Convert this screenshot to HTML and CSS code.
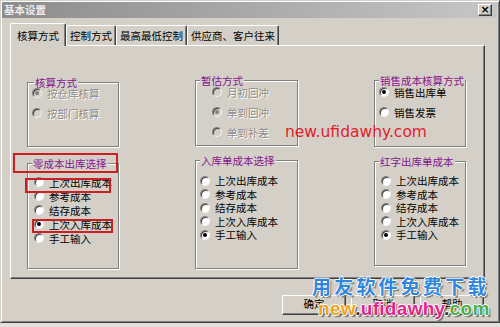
FILE: index.html
```html
<!DOCTYPE html>
<html lang="zh-CN">
<head>
<meta charset="utf-8">
<title>基本设置</title>
<link rel="stylesheet" href="styles.css">
</head>
<body>
<div class="window">
  <div class="titlebar">
    <span class="title">基本设置</span>
    <span class="close">×</span>
  </div>
  <div class="content">
    <div class="tabs">
      <div class="tab active">核算方式</div>
      <div class="tab">控制方式</div>
      <div class="tab">最高最低控制</div>
      <div class="tab">供应商、客户往来</div>
    </div>
    <div class="panel">
      <div class="groups">
        <div class="group g1">
          <span class="legend">核算方式</span>
          <div class="opt disabled checked"><span class="radio"></span>按仓库核算</div>
          <div class="opt disabled"><span class="radio"></span>按部门核算</div>
        </div>
        <div class="group g2">
          <span class="legend">暂估方式</span>
          <div class="opt disabled"><span class="radio"></span>月初回冲</div>
          <div class="opt disabled checked"><span class="radio"></span>单到回冲</div>
          <div class="opt disabled"><span class="radio"></span>单到补差</div>
        </div>
        <div class="group g3">
          <span class="legend">销售成本核算方式</span>
          <div class="opt checked"><span class="radio"></span>销售出库单</div>
          <div class="opt"><span class="radio"></span>销售发票</div>
        </div>
        <div class="group g4">
          <span class="legend">零成本出库选择</span>
          <div class="opt"><span class="radio"></span>上次出库成本</div>
          <div class="opt"><span class="radio"></span>参考成本</div>
          <div class="opt"><span class="radio"></span>结存成本</div>
          <div class="opt checked"><span class="radio"></span>上次入库成本</div>
          <div class="opt"><span class="radio"></span>手工输入</div>
        </div>
        <div class="group g5">
          <span class="legend">入库单成本选择</span>
          <div class="opt"><span class="radio"></span>上次出库成本</div>
          <div class="opt"><span class="radio"></span>参考成本</div>
          <div class="opt"><span class="radio"></span>结存成本</div>
          <div class="opt"><span class="radio"></span>上次入库成本</div>
          <div class="opt checked"><span class="radio"></span>手工输入</div>
        </div>
        <div class="group g6">
          <span class="legend">红字出库单成本</span>
          <div class="opt"><span class="radio"></span>上次出库成本</div>
          <div class="opt"><span class="radio"></span>参考成本</div>
          <div class="opt"><span class="radio"></span>结存成本</div>
          <div class="opt"><span class="radio"></span>上次入库成本</div>
          <div class="opt checked"><span class="radio"></span>手工输入</div>
        </div>
      </div>
      <div class="mark mark-a"></div>
      <div class="mark mark-b"></div>
      <div class="mark mark-c"></div>
    </div>
    <div class="buttons">
      <div class="btn">确定</div>
      <div class="btn">取消</div>
      <div class="btn">帮助</div>
    </div>
  </div>
  <div class="wm-red">new.ufidawhy.com</div>
  <div class="wm-blue">用友软件免费下载</div>
  <div class="wm-color"><span class="c-new">new</span><span class="c-dot">.</span><span class="c-uf">ufidawhy</span><span class="c-dot">.</span><span class="c-com">com</span></div>
</div>
</body>
</html>
```
FILE: styles.css
```css
html, body {
  margin: 0;
  padding: 0;
}
body {
  width: 500px;
  height: 327px;
  background: #e2e0dc;
  overflow: hidden;
  font-family: "Noto Sans CJK SC", "Noto Sans", sans-serif;
}
.window {
  position: relative;
  width: 500px;
  height: 323px;
  box-sizing: border-box;
  background: #d4d0c8;
  border: 1px solid;
  border-color: #d4d0c8 #404040 #404040 #d4d0c8;
  box-shadow: inset 1px 1px 0 #fff, inset -1px -1px 0 #808080;
  padding: 1px 2px 2px 1px;
  display: flex;
  flex-direction: column;
}
.titlebar {
  height: 16px;
  background: linear-gradient(to right, #8c8c8c, #c6c6c6);
  display: flex;
  align-items: center;
  justify-content: space-between;
  padding: 0 5px 0 2px;
}
.title {
  color: #ececec;
  font-size: 10.5px;
  font-weight: bold;
  line-height: 14px;
}
.close {
  width: 14px;
  height: 12px;
  box-sizing: border-box;
  background: #d4d0c8;
  border: 1px solid;
  border-color: #fff #404040 #404040 #fff;
  box-shadow: inset -1px -1px 0 #808080;
  font-family: "DejaVu Sans", sans-serif;
  font-weight: bold;
  font-size: 11px;
  line-height: 9px;
  text-align: center;
  color: #000;
}
.content {
  flex: 1;
  padding: 0 12px 0 8px;
  display: flex;
  flex-direction: column;
}
.tabs {
  margin-top: 5px;
  height: 22px;
  display: flex;
  align-items: flex-end;
}
.tab {
  height: 20px;
  box-sizing: border-box;
  padding: 3px 3px 0 3px;
  font-size: 10.5px;
  line-height: 14px;
  color: #000;
  border-top: 1px solid #fff;
  border-left: 1px solid #fff;
  border-right: 1px solid #404040;
  box-shadow: inset -1px 0 0 #808080;
  border-radius: 2px 2px 0 0;
  white-space: nowrap;
}
.tab.active {
  position: relative;
  z-index: 1;
  height: 23px;
  margin-bottom: -1px;
  padding: 5px 6px 0 6px;
  background: #d4d0c8;
}
.panel {
  position: relative;
  height: 234px;
  box-sizing: border-box;
  border: 1px solid;
  border-color: #fff #404040 #404040 #fff;
  box-shadow: inset -1px -1px 0 #808080;
}
.groups {
  display: grid;
  grid-template-columns: 92px 103px 92px;
  column-gap: 76px;
  row-gap: 13px;
  align-items: start;
  padding: 34px 0 0 16px;
}
.group {
  position: relative;
  box-sizing: border-box;
  border: 1px solid #808080;
  box-shadow: 1px 1px 0 #fff, inset 1px 1px 0 #fff;
  display: flex;
  flex-direction: column;
}
.legend {
  position: absolute;
  top: -7px;
  left: 4px;
  padding: 0 1px;
  background: #d4d0c8;
  color: #85148e;
  font-size: 10.5px;
  line-height: 13px;
  white-space: nowrap;
}
.g1 { margin-top: 2px; height: 65px; padding: 0 0 0 4px; }
.g1 .legend { left: 6px; }
.g2 { height: 66px; padding: 1px 0 0 16px; }
.g3 { height: 67px; padding: 1px 0 0 4px; }
.g4 { margin-top: 3px; height: 106px; padding: 11px 0 0 6px; }
.g5 { height: 109px; padding: 13px 0 0 4px; }
.g6 { margin-top: 1px; height: 105px; padding: 12px 0 0 6px; }
.opt {
  display: flex;
  align-items: center;
  gap: 5px;
  height: 20px;
  font-size: 10.5px;
  color: #000;
  white-space: nowrap;
}
.g4 .opt { height: 14px; }
.g5 .opt, .g6 .opt { height: 13.5px; }
.radio {
  position: relative;
  flex: none;
  width: 10px;
  height: 10px;
  box-sizing: border-box;
  border-radius: 50%;
  background: #fff;
  border: 1px solid;
  border-color: #808080 #f4f4f4 #f4f4f4 #808080;
  box-shadow: inset 1px 1px 0 #404040;
}
.checked .radio::after {
  content: "";
  position: absolute;
  left: 2px;
  top: 2px;
  width: 4px;
  height: 4px;
  border-radius: 50%;
  background: #000;
}
.disabled {
  color: #8c8c8c;
  text-shadow: 1px 1px 0 #fff;
}
.disabled .radio {
  background: #d4d0c8;
}
.disabled.checked .radio::after {
  background: #808080;
}
.mark {
  position: absolute;
  box-sizing: border-box;
  border: 2px solid #cc1f24;
}
.mark-a { left: 2px; top: 107px; width: 105px; height: 20px; }
.mark-b { left: 14px; top: 132px; width: 86px; height: 15px; }
.mark-c { left: 21px; top: 173px; width: 81px; height: 14px; }
.buttons {
  margin-top: 16px;
  padding-right: 1px;
  display: flex;
  justify-content: flex-end;
  gap: 5px;
}
.btn {
  width: 64px;
  height: 20px;
  box-sizing: border-box;
  border: 1px solid;
  border-color: #fff #404040 #404040 #fff;
  box-shadow: inset -1px -1px 0 #808080;
  font-size: 10.5px;
  line-height: 15px;
  text-align: center;
  color: #000;
}
.wm-red {
  position: absolute;
  left: 284px;
  top: 124px;
  font-family: "DejaVu Sans", sans-serif;
  font-size: 15.5px;
  line-height: 1;
  color: #e31d2b;
  white-space: nowrap;
}
.wm-blue {
  position: absolute;
  left: 311px;
  top: 275px;
  font-family: "Noto Sans CJK SC", sans-serif;
  font-weight: bold;
  font-size: 19px;
  line-height: 1;
  letter-spacing: 3.2px;
  color: #2f86dc;
  white-space: nowrap;
  text-shadow: 1px 0 0 #fff, -1px 0 0 #fff, 0 1px 0 #fff, 0 -1px 0 #fff, 2px 2px 1px #7a7a7a;
}
.wm-color {
  position: absolute;
  left: 317px;
  top: 298px;
  font-family: "Liberation Sans", Arial, sans-serif;
  font-weight: bold;
  font-size: 19px;
  line-height: 1;
  letter-spacing: 0.3px;
  white-space: nowrap;
  text-shadow: 1px 0 0 #fff, -1px 0 0 #fff, 0 1px 0 #fff, 0 -1px 0 #fff, 2px 2px 1px #6a6a6a;
}
.c-new { color: #f3a21c; }
.c-dot { color: #303030; }
.c-uf { color: #e2268c; }
.c-com { color: #4cb046; }
```
